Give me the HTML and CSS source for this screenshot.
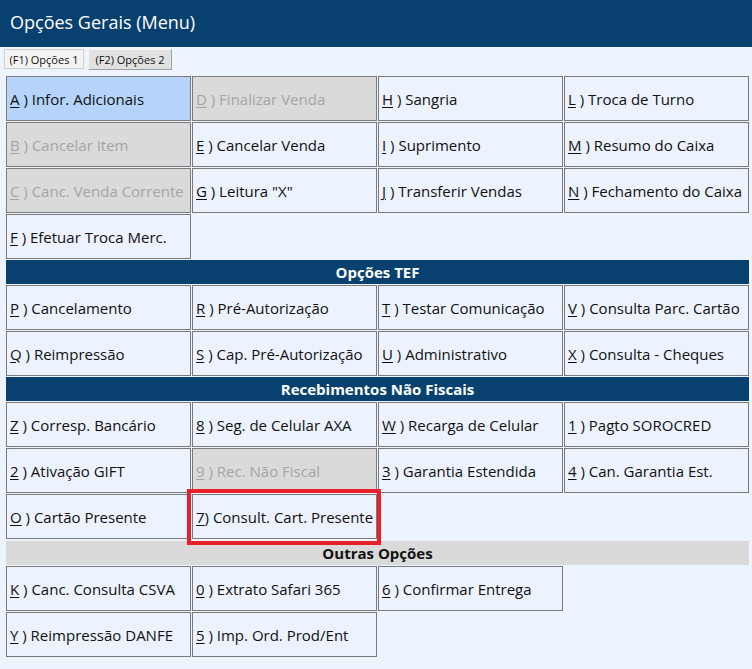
FILE: index.html
```html
<!DOCTYPE html>
<html lang="pt">
<head>
<meta charset="utf-8">
<title>Opções Gerais (Menu)</title>
<link rel="stylesheet" href="styles.css">
</head>
<body>
<div class="titlebar">Opções Gerais (Menu)</div>
<div class="tabs">
  <div class="tab tab-active">(F1) Opções 1</div>
  <div class="tab">(F2) Opções 2</div>
</div>
<div class="grid">
  <div class="cell selected"><u>A</u>&nbsp;) Infor. Adicionais</div>
  <div class="cell disabled"><u>D</u>&nbsp;) Finalizar Venda</div>
  <div class="cell"><u>H</u>&nbsp;) Sangria</div>
  <div class="cell"><u>L</u>&nbsp;) Troca de Turno</div>

  <div class="cell disabled"><u>B</u>&nbsp;) Cancelar Item</div>
  <div class="cell"><u>E</u>&nbsp;) Cancelar Venda</div>
  <div class="cell"><u>I</u>&nbsp;) Suprimento</div>
  <div class="cell"><u>M</u>&nbsp;) Resumo do Caixa</div>

  <div class="cell disabled"><u>C</u>&nbsp;) Canc. Venda Corrente</div>
  <div class="cell"><u>G</u>&nbsp;) Leitura "X"</div>
  <div class="cell"><u>J</u>&nbsp;) Transferir Vendas</div>
  <div class="cell"><u>N</u>&nbsp;) Fechamento do Caixa</div>

  <div class="cell"><u>F</u>&nbsp;) Efetuar Troca Merc.</div>
  <div class="empty"></div>
  <div class="empty"></div>
  <div class="empty"></div>

  <div class="section">Opções TEF</div>

  <div class="cell"><u>P</u>&nbsp;) Cancelamento</div>
  <div class="cell"><u>R</u>&nbsp;) Pré-Autorização</div>
  <div class="cell"><u>T</u>&nbsp;) Testar Comunicação</div>
  <div class="cell"><u>V</u>&nbsp;) Consulta Parc. Cartão</div>

  <div class="cell"><u>Q</u>&nbsp;) Reimpressão</div>
  <div class="cell"><u>S</u>&nbsp;) Cap. Pré-Autorização</div>
  <div class="cell"><u>U</u>&nbsp;) Administrativo</div>
  <div class="cell"><u>X</u>&nbsp;) Consulta - Cheques</div>

  <div class="section">Recebimentos Não Fiscais</div>

  <div class="cell"><u>Z</u>&nbsp;) Corresp. Bancário</div>
  <div class="cell"><u>8</u>&nbsp;) Seg. de Celular AXA</div>
  <div class="cell"><u>W</u>&nbsp;) Recarga de Celular</div>
  <div class="cell"><u>1</u>&nbsp;) Pagto SOROCRED</div>

  <div class="cell"><u>2</u>&nbsp;) Ativação GIFT</div>
  <div class="cell disabled"><u>9</u>&nbsp;) Rec. Não Fiscal</div>
  <div class="cell"><u>3</u>&nbsp;) Garantia Estendida</div>
  <div class="cell"><u>4</u>&nbsp;) Can. Garantia Est.</div>

  <div class="cell"><u>O</u>&nbsp;) Cartão Presente</div>
  <div class="cell highlighted"><u>7</u>) Consult. Cart. Presente<span class="redbox"></span></div>
  <div class="empty"></div>
  <div class="empty"></div>

  <div class="section section-gray">Outras Opções</div>

  <div class="cell"><u>K</u>&nbsp;) Canc. Consulta CSVA</div>
  <div class="cell"><u>0</u>&nbsp;) Extrato Safari 365</div>
  <div class="cell"><u>6</u>&nbsp;) Confirmar Entrega</div>
  <div class="empty"></div>

  <div class="cell"><u>Y</u>&nbsp;) Reimpressão DANFE</div>
  <div class="cell"><u>5</u>&nbsp;) Imp. Ord. Prod/Ent</div>
  <div class="empty"></div>
  <div class="empty"></div>
</div>
</body>
</html>
```

FILE: styles.css
```css
* { box-sizing: border-box; }

html, body {
  margin: 0;
  padding: 0;
  background: #edf4fe;
  font-family: "Open Sans", "Noto Sans", "DejaVu Sans", sans-serif;
  color: #1a1a1a;
}

.titlebar {
  height: 47px;
  background: #08416f;
  color: #ffffff;
  font-size: 18px;
  line-height: 45px;
  padding-left: 10px;
}

.tabs {
  display: flex;
  gap: 4px;
  padding: 2px 0 0 4px;
  height: 29px;
  align-items: flex-start;
}

.tab {
  height: 21px;
  width: 84px;
  font-size: 11px;
  line-height: 19px;
  text-align: center;
  background: #e1e1e1;
  border: 1px solid #a0a0a0;
  border-top-color: #f4f4f4;
  border-left-color: #f4f4f4;
  color: #111;
}

.tab-active {
  width: 80px;
  height: 20px;
  background: #f4f4f4;
  border: 1px solid #d0d0d0;
}

.grid {
  display: grid;
  grid-template-columns: repeat(4, 185px);
  grid-auto-rows: auto;
  gap: 1px;
  margin-left: 6px;
  width: 743px;
}

.cell, .empty {
  height: 45px;
}

.cell {
  position: relative;
  display: flex;
  align-items: center;
  padding-left: 3px;
  border: 1px solid #7a7a7a;
  background: #ecf3fe;
  font-size: 15px;
  white-space: nowrap;
  color: #111;
}

.cell u {
  text-underline-offset: 2px;
}

.selected {
  background: #b4d4fb;
}

.disabled {
  background: #dadada;
  color: #a5a5a5;
}

.section {
  grid-column: 1 / -1;
  height: 24px;
  background: #08416f;
  color: #ffffff;
  font-weight: 700;
  font-size: 15px;
  line-height: 24px;
  text-align: center;
}

.section-gray {
  background: #dadada;
  color: #111;
  margin-top: 1px;
}

.redbox {
  position: absolute;
  left: -6px;
  top: -6px;
  right: -5px;
  bottom: -7px;
  border: 4px solid #e8202a;
  pointer-events: none;
}
```
